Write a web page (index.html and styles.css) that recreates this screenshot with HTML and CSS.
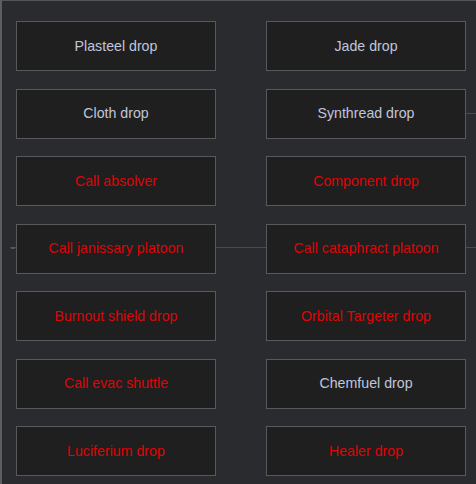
FILE: index.html
```html
<!DOCTYPE html>
<html lang="en">
<head>
  <meta charset="UTF-8">
  <title>Drops</title>
  <link rel="stylesheet" href="styles.css">
</head>
<body>
  <div class="panel">
    <div class="wire wire-mid"></div>
    <div class="wire wire-right"></div>
    <div class="wire-stub"></div>

    <div class="grid">
      <button class="drop">Plasteel drop</button>
      <button class="drop">Jade drop</button>
      <button class="drop">Cloth drop</button>
      <button class="drop">Synthread drop</button>
      <button class="drop locked">Call absolver</button>
      <button class="drop locked">Component drop</button>
      <button class="drop locked">Call janissary platoon</button>
      <button class="drop locked">Call cataphract platoon</button>
      <button class="drop locked">Burnout shield drop</button>
      <button class="drop locked">Orbital Targeter drop</button>
      <button class="drop locked">Call evac shuttle</button>
      <button class="drop">Chemfuel drop</button>
      <button class="drop locked">Luciferium drop</button>
      <button class="drop locked">Healer drop</button>
    </div>
  </div>
</body>
</html>
```

FILE: styles.css
```css
html, body {
  margin: 0;
  height: 100%;
  background: #2a2b2e;
  overflow: hidden;
}
.panel {
  position: relative;
  height: 484px;
  box-sizing: border-box;
  border-left: 2px solid #5d5e61;
  border-top: 1px solid #55565a;
  font-family: "Liberation Sans", Arial, sans-serif;
}
.grid {
  position: relative;
  display: grid;
  grid-template-columns: 200px 200px;
  grid-auto-rows: 50px;
  column-gap: 50px;
  row-gap: 17.5px;
  padding: 20px 0 0 14px;
}
.drop {
  margin: 0;
  padding: 0 0 1px;
  background: #1f1f20;
  border: 1px solid #58595c;
  color: #c0c5dc;
  font-family: inherit;
  font-size: 14.2px;
  cursor: pointer;
}
.drop:hover {
  background: #29292b;
}
.locked {
  color: #dc0606;
}
.wire {
  position: absolute;
  height: 1px;
  background: #4a4b4e;
}
.wire-mid {
  top: 246px;
  left: 8px;
  right: 0;
}
.wire-right {
  top: 112px;
  left: 464px;
  right: 0;
}
.wire-stub {
  position: absolute;
  top: 246px;
  left: 9px;
  width: 4px;
  height: 2px;
  background: #55565a;
}
```
